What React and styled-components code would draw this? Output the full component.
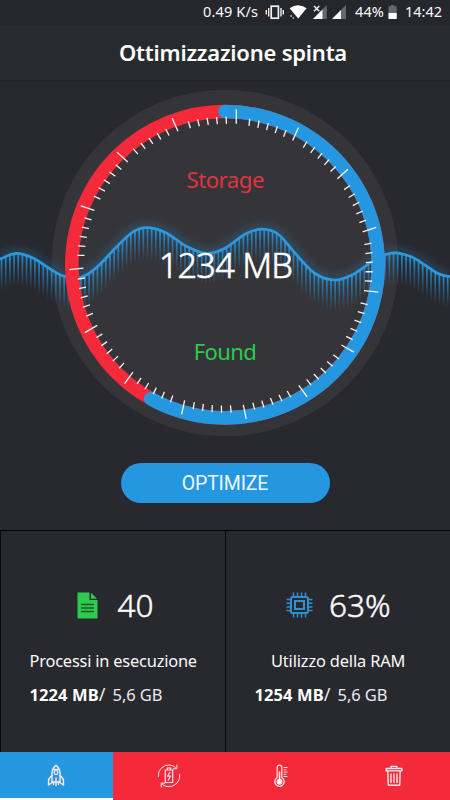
import React from 'react';
import styled, { createGlobalStyle } from 'styled-components';

const BLUE = '#2597e0';
const RED = '#f42a3a';
const GREEN = '#2bcb4b';

const GlobalStyle = createGlobalStyle`
  body { margin: 0; background: #28292e; }
  * { box-sizing: border-box; }
`;

const Screen = styled.div`
  width: 450px;
  height: 800px;
  display: flex;
  flex-direction: column;
  overflow: hidden;
  background: #28292e;
  color: #fafafa;
  font-family: "Noto Sans", sans-serif;
`;

const StatusBar = styled.div`
  height: 25px;
  display: flex;
  justify-content: flex-end;
  align-items: center;
  padding-right: 7px;
  background: #26272c;
  white-space: nowrap;
`;

const StatusText = styled.span`
  width: ${p => p.$w}px;
  font-size: 14.5px;
  line-height: 23px;
  height: 25px;
  letter-spacing: ${p => p.$ls || 0}px;
`;

const StatusIcons = styled.svg`
  display: block;
  width: 93px;
  height: 25px;
`;

const BatteryIcon = styled.svg`
  display: block;
  width: 18px;
  height: 25px;
  margin-left: 1px;
`;

const Header = styled.header`
  height: 56px;
  flex: none;
  background: #272b2e;
  border-bottom: 1px solid #232529;
  text-align: center;
`;

const Title = styled.h1`
  margin: 0;
  padding-left: 16px;
  font-size: 22px;
  line-height: 54px;
  font-weight: 600;
  letter-spacing: -0.22px;
  color: #fff;
`;

const Gauge = styled.svg`
  display: block;
  flex: none;
  width: 450px;
  height: 369px;
`;

const GaugeText = styled.text`
  font-family: "Noto Sans", sans-serif;
  font-size: ${p => p.$size}px;
  font-weight: ${p => p.$weight || 400};
  letter-spacing: ${p => p.$ls || 0}px;
  fill: ${p => p.$color};
  stroke: ${p => p.$color};
  stroke-width: ${p => p.$stroke || 0}px;
  text-anchor: middle;
`;

const ActionArea = styled.div`
  height: 80px;
  flex: none;
  display: flex;
  justify-content: center;
  align-items: flex-start;
  padding-top: 13px;
`;

const OptimizeButton = styled.button`
  width: 209px;
  height: 40px;
  border: 0;
  border-radius: 20px;
  padding: 0;
  background: ${BLUE};
  color: #ecf8ff;
  font: 400 19.5px/42px Roboto, sans-serif;
  letter-spacing: -0.15px;
`;

const Cards = styled.div`
  height: 222px;
  flex: none;
  display: grid;
  grid-template-columns: 1fr 1fr;
  border-top: 1px solid #050506;
`;

const Card = styled.section`
  border-left: 1px solid #0a0a0c;
  padding-top: 50px;
  white-space: nowrap;
`;

const CardHead = styled.div`
  height: 48px;
  display: flex;
  align-items: center;
  padding-left: ${p => p.$left}px;
  gap: ${p => p.$gap}px;
`;

const CardIcon = styled.svg`
  display: block;
  flex: none;
`;

const Value = styled.span`
  font-size: 31.5px;
  font-weight: 300;
  line-height: 46px;
  -webkit-text-stroke: 0.5px #fafafa;
`;

const CardLabel = styled.div`
  margin-top: 15px;
  padding-left: ${p => p.$left}px;
  font-size: 16.4px;
  line-height: 34px;
  letter-spacing: ${p => p.$ls}px;
`;

const Usage = styled.div`
  padding-left: 28.5px;
  font-size: 16.5px;
  line-height: 33px;
  letter-spacing: -0.1px;
  color: #e9e9eb;
`;

const Used = styled.b`
  font-weight: 700;
  letter-spacing: 0.1px;
  color: #fff;
`;

const Slash = styled.span`
  margin-right: 3px;
  font-size: 18px;
  line-height: 1;
`;

const Nav = styled.nav`
  height: 48px;
  flex: none;
  display: grid;
  grid-template-columns: repeat(4, 1fr);
`;

const Tab = styled.a`
  display: flex;
  justify-content: center;
  align-items: flex-start;
  padding-top: 11px;
  background: ${p => (p.$active ? BLUE : RED)};
  border-bottom: ${p => (p.$active ? '2px solid #fff' : '0')};
`;

const TabIcon = styled.svg`
  display: block;
  width: 26px;
  height: 26px;
  fill: none;
  stroke: #ffe9ec;
  stroke-width: 1.2;
  stroke-linecap: round;
  stroke-linejoin: round;
`;

const CX = 225;
const CY = 183.7;

const WAVE = [
  [-14, 268], [0, 259.2], [16.7, 253.3], [33, 258], [48, 267.5], [62, 275.5], [76, 278.3], [88, 274],
  [100, 264.3], [116.7, 246.7], [133, 231.8], [148.3, 227.7], [166.7, 233.2], [186.7, 246.5],
  [206.7, 253.3], [225, 248.2], [245, 234.2], [262, 229.2], [278.5, 234.5], [298, 256.5],
  [315, 273.5], [334, 280], [351.5, 275.2], [368.5, 264], [382, 256], [395, 252.9], [411.7, 257],
  [425, 265], [438, 273.5], [450, 276.5], [464, 275],
].map(([x, y]) => [x, y - 81]);

const wavePath = WAVE.slice(1, -2).reduce((d, p, i) => {
  const [a, b, c, e] = [WAVE[i], p, WAVE[i + 2], WAVE[i + 3]];
  const f = n => n.toFixed(2);
  return `${d} C${f(b[0] + (c[0] - a[0]) / 6)} ${f(b[1] + (c[1] - a[1]) / 6)} ${f(c[0] - (e[0] - b[0]) / 6)} ${f(c[1] - (e[1] - b[1]) / 6)} ${c[0]} ${f(c[1])}`;
}, `M${WAVE[1][0]} ${WAVE[1][1]}`);

const waveY = x => {
  const i = Math.max(1, WAVE.findIndex(p => p[0] > x));
  const [a, b] = [WAVE[i - 1], WAVE[i]];
  return a[1] + ((b[1] - a[1]) * (x - a[0])) / (b[0] - a[0]);
};

const bars = Array.from({ length: 108 }, (_, i) => 1.5 + i * 4.17);
const minors = [9.7, 13.4, 17.1, 20.8, 24.5];

function Wave() {
  return (
    <g>
      <path d={wavePath} transform="translate(0 -1)" fill="none" stroke={BLUE} strokeWidth="6" opacity="0.36" filter="url(#glow)" />
      {bars.map(x => (
        <rect key={x} x={x - 0.8} y={waveY(x)} width="1.7" height="32" fill="url(#fade)" />
      ))}
      <path d={wavePath} fill="none" stroke="#2e98dc" strokeWidth="2.7" />
    </g>
  );
}

function Ticks() {
  return (
    <g stroke="#f5f5f7">
      {Array.from({ length: 15 }, (_, i) => (
        <g key={i} transform={`rotate(${i * 24} ${CX} ${CY})`}>
          <line x1={CX + 11.3} x2={CX + 11.3} y1={CY - 155.3} y2={CY - 141} strokeWidth="1.3" />
          {minors.map(a => (
            <g key={a} transform={`rotate(${a} ${CX} ${CY})`}>
              <line x1={CX} x2={CX} y1={CY - 140.8} y2={CY - 148} strokeWidth="1.3" transform={`rotate(-3 ${CX} ${CY - 144.5})`} />
            </g>
          ))}
        </g>
      ))}
    </g>
  );
}

function StorageGauge() {
  return (
    <Gauge viewBox="0 0 450 369">
      <defs>
        <linearGradient id="fade" x1="0" y1="0" x2="0" y2="1">
          <stop offset="0" stopColor={BLUE} stopOpacity="0.9" />
          <stop offset="0.45" stopColor={BLUE} stopOpacity="0.5" />
          <stop offset="1" stopColor={BLUE} stopOpacity="0" />
        </linearGradient>
        <filter id="glow" x="-5%" y="-50%" width="110%" height="200%">
          <feGaussianBlur stdDeviation="5" />
        </filter>
      </defs>
      <circle cx="225" cy="182" r="173.3" fill="#353539" />
      <Wave />
      <circle cx={CX} cy={CY} r="153.2" fill="none" stroke={RED} strokeWidth="13.6" />
      <path d="M225 30.5 A153.2 153.2 0 1 1 150.7 317.7" fill="none" stroke={BLUE} strokeWidth="13.6" strokeLinecap="round" />
      <Ticks />
      <GaugeText x="225.2" y="106.5" $size={22.3} $ls={-0.55} $color="#e03340">Storage</GaugeText>
      <GaugeText x="225.5" y="197.3" $size={34.3} $ls={-0.75} $weight={300} $stroke={0.6} $color="#fff">1234 MB</GaugeText>
      <GaugeText x="225" y="278.5" $size={22} $ls={-0.6} $color={GREEN}>Found</GaugeText>
    </Gauge>
  );
}

function FileIcon() {
  return (
    <CardIcon width="21" height="27" viewBox="0 0 21 27">
      <path d="M0.5 0.5H12.5V8H20.5V26.5H0.5Z" fill={GREEN} />
      <path d="M14 0.8L20 6.7H14Z" fill={GREEN} />
      <path d="M4 12.5H17M4 16H17M4 19.5H17" stroke="#1c5a2c" strokeWidth="1.4" />
    </CardIcon>
  );
}

function ChipIcon() {
  return (
    <CardIcon width="27" height="26" viewBox="0 0 27 26" fill="none" stroke="#2e90cf" strokeWidth="1.5">
      <rect x="5" y="5" width="17" height="16" rx="1.8" strokeWidth="2" />
      <rect x="9" y="9" width="9" height="8" strokeWidth="2" />
      <path d="M7.5 0.5V4.5M11.5 0.5V4.5M15.5 0.5V4.5M19.5 0.5V4.5M7.5 21.5V25.5M11.5 21.5V25.5M15.5 21.5V25.5M19.5 21.5V25.5" />
      <path d="M0.5 7.5H5M0.5 11.2H5M0.5 14.9H5M0.5 18.5H5M22 7.5H26.5M22 11.2H26.5M22 14.9H26.5M22 18.5H26.5" />
    </CardIcon>
  );
}

export default function App() {
  return (
    <>
      <GlobalStyle />
      <Screen>
        <StatusBar>
          <StatusText $w={59} $ls={0.15}>0.49 K/s</StatusText>
          <StatusIcons viewBox="262 0 93 25">
            <rect x="271.2" y="6.2" width="7.2" height="12" fill="none" stroke="#f2f2f2" strokeWidth="1.7" />
            <path d="M268.7 8V16.5M281 8V16.5M266.3 10V14.5M283.3 10V14.5" stroke="#f2f2f2" strokeWidth="1.4" />
            <path d="M289.6 8.2Q298 2.2 306.6 8.2L298.2 18.5Z" fill="#fff" />
            <path d="M290.2 15.2h1.8v1.5h-1.8zM292.6 17.2h1.4v1.5h-1.4z" fill="#bbb" />
            <path d="M326.8 5V19H313Z" fill="#66676b" />
            <path d="M322.5 9.5V19H313Z" fill="#fff" />
            <path d="M314 6L319.3 11.3M319.3 6L314 11.3" stroke="#f2f2f2" strokeWidth="1.4" />
            <path d="M346 5V19H332Z" fill="#66676b" />
            <path d="M341 10V19H332Z" fill="#fff" />
          </StatusIcons>
          <StatusText $w={31} $ls={0.1}>44%</StatusText>
          <BatteryIcon viewBox="387 0 18 25">
            <path d="M388.5 6.3H391V5H394.2V6.3H396.7V19H388.5Z" fill="#66676b" />
            <path d="M388.5 13H396.7V19H388.5Z" fill="#fff" />
          </BatteryIcon>
          <StatusText $w={38}>14:42</StatusText>
        </StatusBar>
        <Header>
          <Title>Ottimizzazione spinta</Title>
        </Header>
        <StorageGauge />
        <ActionArea>
          <OptimizeButton>OPTIMIZE</OptimizeButton>
        </ActionArea>
        <Cards>
          <Card>
            <CardHead $left={76} $gap={19.5}>
              <FileIcon />
              <Value>40</Value>
            </CardHead>
            <CardLabel $left={28.5} $ls={-0.2}>Processi in esecuzione</CardLabel>
            <Usage><Used>1224 MB</Used><Slash>/</Slash> 5,6 GB</Usage>
          </Card>
          <Card>
            <CardHead $left={59.5} $gap={16.5}>
              <ChipIcon />
              <Value>63%</Value>
            </CardHead>
            <CardLabel $left={45} $ls={-0.15}>Utilizzo della RAM</CardLabel>
            <Usage><Used>1254 MB</Used><Slash>/</Slash> 5,6 GB</Usage>
          </Card>
        </Cards>
        <Nav>
          <Tab $active>
            <TabIcon viewBox="0 0 26 26">
              <path strokeWidth="1.4" d="M9 19V9Q9.5 5 13 2.2Q16.5 5 17 9V19ZM9.7 6.5H16.3" />
              <circle cx="13" cy="9.6" r="1.9" />
              <path strokeWidth="1.4" d="M9 12.5Q5.5 15 5.5 18V22L9 19.5M17 12.5Q20.5 15 20.5 18V22L17 19.5M13 15V22.5M10.5 19V21.5M15.5 19V21.5" />
            </TabIcon>
          </Tab>
          <Tab>
            <TabIcon viewBox="0 0 26 26">
              <path strokeWidth="1" d="M2.3 13.5Q2 8 5.2 5.2Q9 1.4 14 2Q17.6 2.5 20 5M20.8 2.2V5.8H17.2M23.8 11.5Q24.4 16 21 20.2Q16.5 24.6 11 23.6Q8 23 5.7 20.8M5.2 24V20.2H8.8" />
              <path strokeWidth="1.2" d="M9.3 7H16.7V19.5H9.3ZM11.3 7V5H14.7V7" />
              <path strokeWidth="1.2" d="M13.8 9.5L11.5 13.2H14.5L12.3 17" />
            </TabIcon>
          </Tab>
          <Tab>
            <TabIcon viewBox="0 0 26 26">
              <path d="M9.2 14.5V4.5Q9.2 2.2 11.5 2.2Q13.8 2.2 13.8 4.5V14.5A4.7 4.7 0 1 1 9.2 14.5Z" />
              <circle cx="11.5" cy="18.7" r="2.4" fill="#fff" />
              <path d="M11.5 9V18" strokeWidth="1.6" />
              <path strokeWidth="1" d="M16 4.5H19M16 6.8H18M16 9.1H19M16 11.4H18M16 13.5H19" />
            </TabIcon>
          </Tab>
          <Tab>
            <TabIcon viewBox="0 0 26 26">
              <path strokeWidth="1.4" d="M5.2 5.5H20.8V7.9H5.2ZM10 5.3V3.4H16V5.3M6.8 8L7.3 22.3H18.7L19.2 8M10 11V19.5M13 11V19.5M16 11V19.5" />
            </TabIcon>
          </Tab>
        </Nav>
      </Screen>
    </>
  );
}
